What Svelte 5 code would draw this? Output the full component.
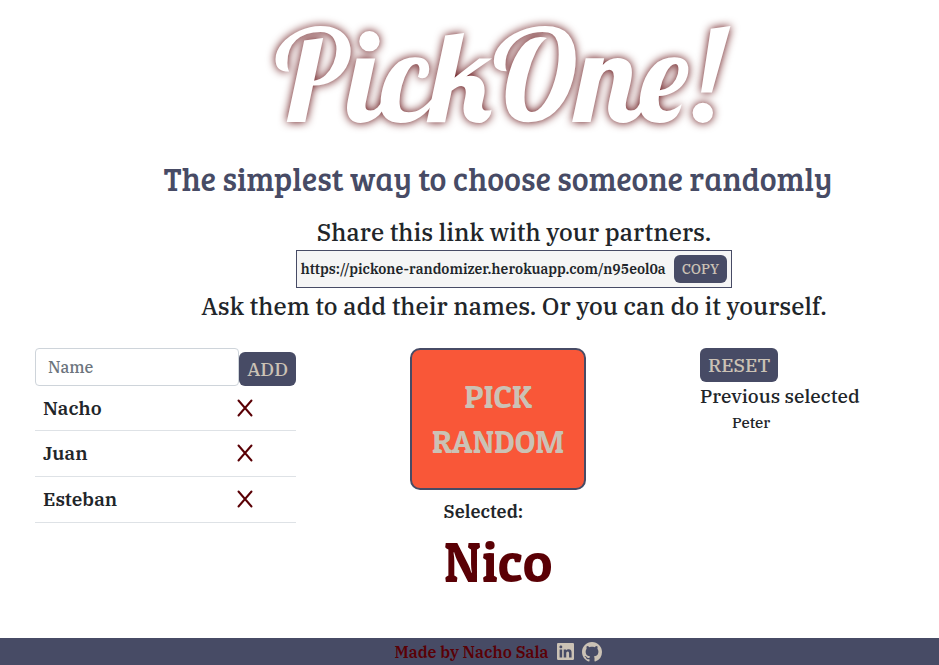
<script>
  let names = $state(['Nacho', 'Juan', 'Esteban']);
  let previous = $state(['Peter']);
  let selected = $state('Nico');
  let name = $state('');
  const link = 'https://pickone-randomizer.herokuapp.com/n95eol0a';

  function add(event) {
    event.preventDefault();
    const value = name.trim();
    if (value) names.push(value);
    name = '';
  }

  function remove(index) {
    names.splice(index, 1);
  }

  function pick() {
    if (!names.length) return;
    const index = Math.floor(Math.random() * names.length);
    if (selected) previous.push(selected);
    selected = names.splice(index, 1)[0];
  }

  function reset() {
    previous = [];
    selected = '';
  }

  function copy() {
    navigator.clipboard?.writeText(link);
  }
</script>

<div class="page">
  <header>
    <h1>PickOne!</h1>
    <h2>The simplest way to choose someone randomly</h2>
  </header>

  <section class="share">
    <p>Share this link with your partners.</p>
    <div class="link">
      <span>{link}</span>
      <button type="button" class="btn small" onclick={copy}>COPY</button>
    </div>
    <p>Ask them to add their names. Or you can do it yourself.</p>
  </section>

  <main>
    <section class="names">
      <form onsubmit={add}>
        <input type="text" placeholder="Name" aria-label="Name" bind:value={name} />
        <button class="btn" type="submit">ADD</button>
      </form>
      <ul>
        {#each names as person, i}
          <li>
            <span>{person}</span>
            <button type="button" class="remove" aria-label="Remove {person}" onclick={() => remove(i)}>
              <svg viewBox="0 0 16 18" width="16" height="18" aria-hidden="true">
                <path d="M1.5 1.5 14.5 16.5M14.5 1.5 1.5 16.5" />
              </svg>
            </button>
          </li>
        {/each}
      </ul>
    </section>

    <section class="picker">
      <button type="button" class="pick" onclick={pick}>PICK<br />RANDOM</button>
      <div class="result">
        <p>Selected:</p>
        <strong>{selected}</strong>
      </div>
    </section>

    <section class="history">
      <button type="button" class="btn" onclick={reset}>RESET</button>
      <h3>Previous selected</h3>
      <ul>
        {#each previous as person}
          <li>{person}</li>
        {/each}
      </ul>
    </section>
  </main>

  <footer>
    <span>Made by Nacho Sala</span>
    <a href="#linkedin" aria-label="LinkedIn">
      <svg viewBox="0 32 448 448" width="17" height="17" aria-hidden="true">
        <path d="M416 32H31.9C14.3 32 0 46.5 0 64.3v383.4C0 465.5 14.3 480 31.9 480H416c17.6 0 32-14.5 32-32.3V64.3c0-17.8-14.4-32.3-32-32.3zM135.4 416H69V202.2h66.5V416zm-33.2-243c-21.3 0-38.5-17.3-38.5-38.5S80.9 96 102.2 96c21.2 0 38.5 17.3 38.5 38.5 0 21.3-17.2 38.5-38.5 38.5zm282.1 243h-66.4V312c0-24.8-.5-56.7-34.5-56.7-34.6 0-39.9 27-39.9 54.9V416h-66.4V202.2h63.7v29.2h.9c8.9-16.8 30.6-34.5 62.9-34.5 67.2 0 79.7 44.3 79.7 101.9V416z" />
      </svg>
    </a>
    <a href="#github" aria-label="GitHub">
      <svg viewBox="0 0 16 16" width="20" height="20" aria-hidden="true">
        <path d="M8 0C3.58 0 0 3.58 0 8c0 3.54 2.29 6.53 5.47 7.59.4.07.55-.17.55-.38 0-.19-.01-.82-.01-1.49-2.01.37-2.53-.49-2.69-.94-.09-.23-.48-.94-.82-1.13-.28-.15-.68-.52-.01-.53.63-.01 1.08.58 1.23.82.72 1.21 1.87.87 2.33.66.07-.52.28-.87.51-1.07-1.78-.2-3.64-.89-3.64-3.95 0-.87.31-1.59.82-2.15-.08-.2-.36-1.02.08-2.12 0 0 .67-.21 2.2.82.64-.18 1.32-.27 2-.27s1.36.09 2 .27c1.53-1.04 2.2-.82 2.2-.82.44 1.1.16 1.92.08 2.12.51.56.82 1.27.82 2.15 0 3.07-1.87 3.75-3.65 3.95.29.25.54.73.54 1.48 0 1.07-.01 1.93-.01 2.2 0 .21.15.46.55.38A8.01 8.01 0 0 0 16 8c0-4.42-3.58-8-8-8z" />
      </svg>
    </a>
  </footer>
</div>

<style>
  .page {
    --navy: #474b65;
    --sand: #cbc2b5;
    --wine: #5a0005;
    min-height: 100vh;
    box-sizing: border-box;
    display: flex;
    flex-direction: column;
    background: #fff;
    color: #212529;
    font-family: 'Roboto Slab', 'IBM Plex Serif', 'DejaVu Serif Condensed', serif;
    font-size: 19px;
    font-weight: 600;
    line-height: 28px;
  }

  h1, h2, h3, p, ul {
    margin: 0;
    padding: 0;
    font-weight: inherit;
  }

  ul {
    list-style: none;
  }

  button, input {
    font-family: inherit;
    font-weight: 500;
    margin: 0;
  }

  button {
    cursor: pointer;
  }

  header {
    padding-left: 57px;
    text-align: center;
  }

  h1 {
    font-family: Lobster, 'Liberation Serif', serif;
    font-size: 128px;
    font-weight: 400;
    line-height: 148px;
    color: #fff;
    text-shadow: 0 0 10px var(--wine);
  }

  h2 {
    margin-top: 11px;
    font-family: 'Bree Serif', 'DejaVu Serif Condensed', 'DejaVu Serif', serif;
    font-size: 32px;
    font-weight: 500;
    line-height: 40px;
    color: var(--navy);
  }

  .share {
    display: flex;
    flex-direction: column;
    align-items: center;
    margin-top: 15px;
    padding-left: 89px;
  }

  .share p {
    font-size: 24px;
    font-weight: 500;
    line-height: 36px;
    white-space: nowrap;
  }

  .link {
    display: flex;
    align-items: center;
    gap: 8px;
    padding: 4px;
    border: 1px solid var(--navy);
    background: #f5f5f5;
    font-size: 14px;
    line-height: 28px;
  }

  .btn {
    padding: 3px 8px;
    border: 0;
    border-radius: 6px;
    background: var(--navy);
    color: var(--sand);
    font-size: 19px;
    line-height: 28px;
  }

  .btn.small {
    padding: 0 8px;
    font-size: 14px;
  }

  main {
    display: flex;
    align-items: flex-start;
    flex: 1;
    gap: 114px;
    margin-top: 24px;
    padding-left: 35px;
  }

  .names {
    flex: 0 0 261px;
    min-width: 0;
  }

  form {
    display: flex;
    align-items: flex-end;
  }

  input {
    flex: 1;
    width: 100%;
    min-width: 0;
    height: 38px;
    box-sizing: border-box;
    padding: 6px 12px;
    border: 1px solid #ced4da;
    border-radius: 4px;
    background: #fff;
    color: #495057;
    font-size: 16px;
  }

  input::placeholder {
    color: #6c757d;
    opacity: 1;
  }

  .names li {
    display: flex;
    align-items: center;
    justify-content: space-between;
    height: 44px;
    padding: 0 43px 1px 8px;
    border-bottom: 1px solid #dee2e6;
  }

  .names li:first-child {
    height: 43px;
  }

  .remove {
    display: flex;
    padding: 0;
    border: 0;
    background: none;
  }

  .remove path {
    fill: none;
    stroke: var(--wine);
    stroke-width: 2;
    stroke-linecap: round;
  }

  .picker {
    display: flex;
    flex-direction: column;
    align-items: center;
  }

  .pick {
    width: 176px;
    height: 142px;
    padding: 0;
    border: 2px solid var(--navy);
    border-radius: 10px;
    background: #f95738;
    color: var(--sand);
    font-family: 'Roboto Slab', 'Patua One', 'DejaVu Serif Condensed', serif;
    font-size: 32px;
    font-weight: 500;
    line-height: 45px;
  }

  .result {
    margin-top: 8px;
  }

  .result p {
    font-size: 18px;
  }

  .result strong {
    display: block;
    color: var(--wine);
    font-family: 'Roboto Slab', 'Patua One', 'DejaVu Serif Condensed', serif;
    font-size: 56px;
    font-weight: 500;
    line-height: 72px;
  }

  .history .btn {
    display: block;
  }

  h3 {
    font-size: 19px;
    font-weight: 500;
    line-height: 28px;
  }

  .history ul {
    padding-left: 32px;
    font-size: 15px;
    font-weight: 500;
    line-height: 26px;
  }

  footer {
    display: flex;
    align-items: center;
    justify-content: center;
    gap: 8px;
    height: 27px;
    padding-left: 57px;
    background: var(--navy);
    color: var(--wine);
    font-size: 16px;
  }

  footer a {
    display: flex;
  }

  footer svg {
    fill: var(--sand);
  }
</style>
